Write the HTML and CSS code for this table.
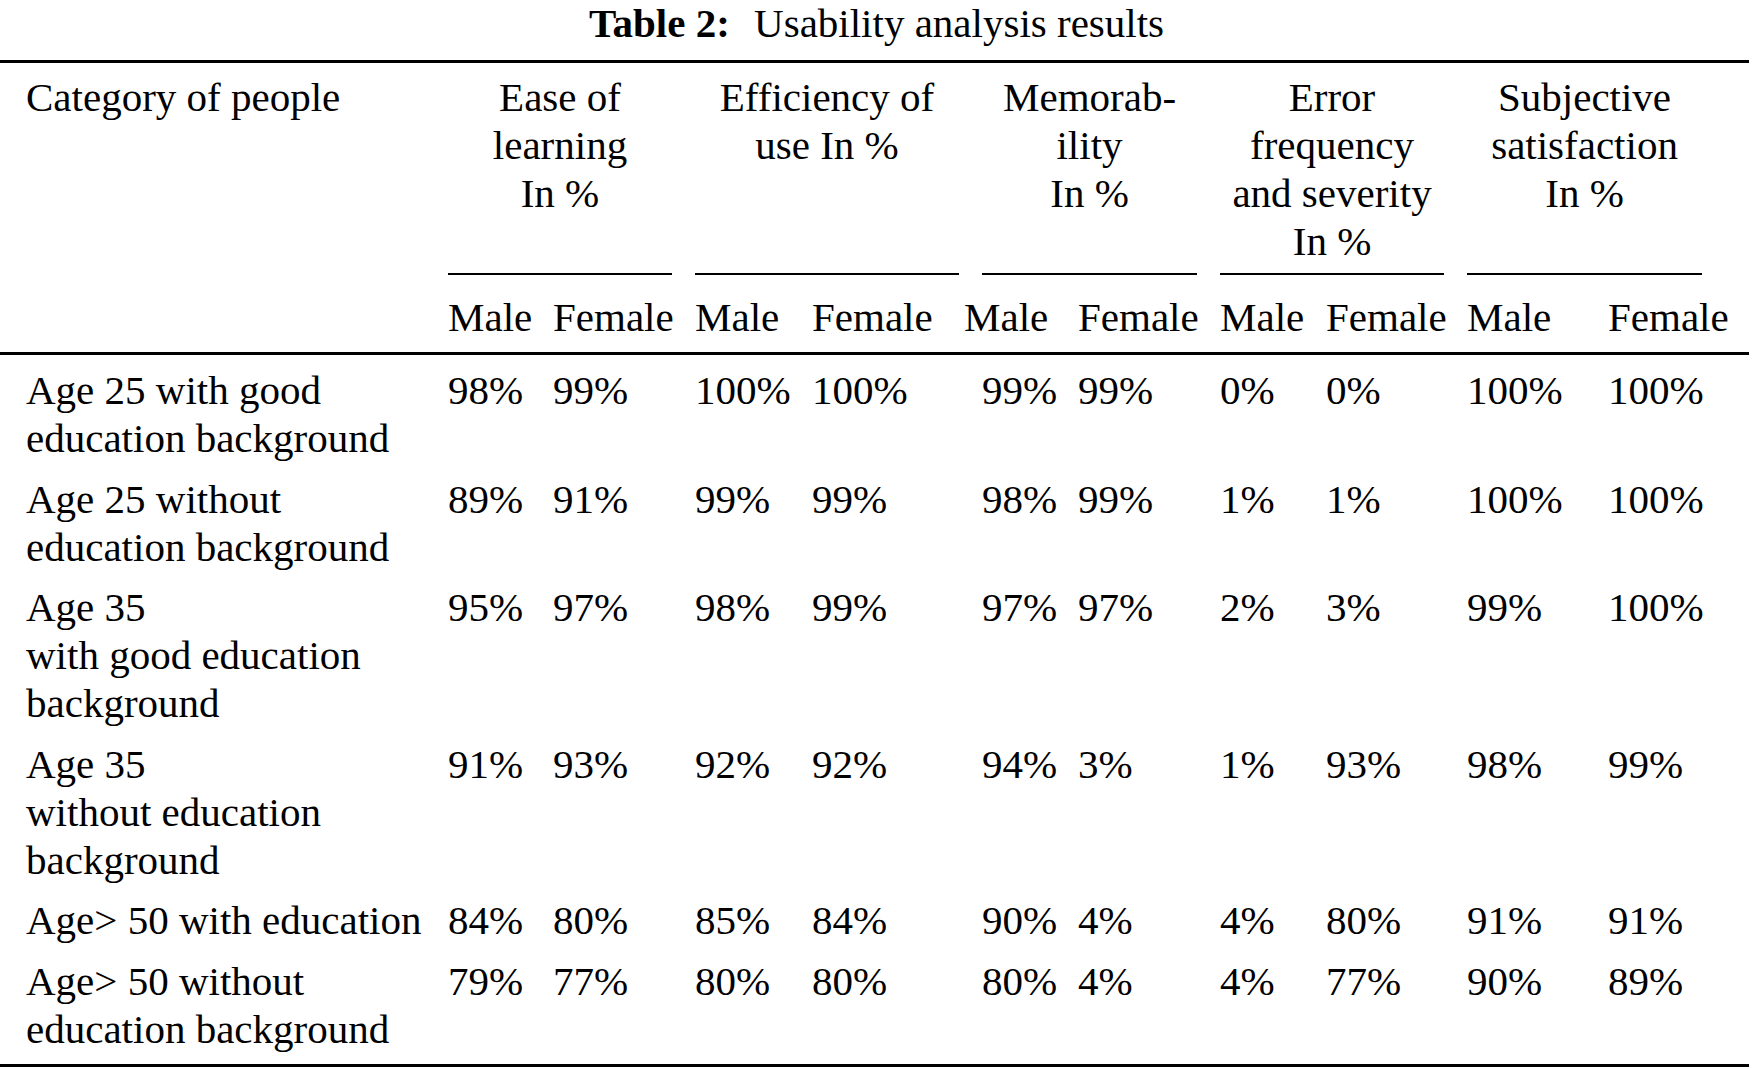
FILE: index.html
```html
<!DOCTYPE html>
<html lang="en">
<head>
<meta charset="utf-8">
<title>Table 2: Usability analysis results</title>
<link rel="stylesheet" href="styles.css">
</head>
<body>
<div class="caption"><b class="label">Table 2:</b> Usability analysis results</div>
<table class="results">
  <colgroup>
    <col class="c-cat">
    <col class="c-w105"><col class="c-w142">
    <col class="c-w117"><col class="c-w170">
    <col class="c-w96"><col class="c-w142">
    <col class="c-w106"><col class="c-w141">
    <col class="c-w141"><col class="c-w141">
  </colgroup>
  <thead>
    <tr class="groups">
      <th class="cat">Category of people</th>
      <th colspan="2"><div class="grp">Ease of<br>learning<br>In %</div></th>
      <th colspan="2"><div class="grp">Efficiency of<br>use In %</div></th>
      <th colspan="2"><div class="grp">Memorab-<br>ility<br>In %</div></th>
      <th colspan="2"><div class="grp">Error<br>frequency<br>and severity<br>In %</div></th>
      <th colspan="2"><div class="grp last">Subjective<br>satisfaction<br>In %</div></th>
    </tr>
    <tr class="sexes">
      <th class="cat"></th>
      <th>Male</th><th>Female</th>
      <th>Male</th><th>Female</th>
      <th class="shift">Male</th><th>Female</th>
      <th>Male</th><th>Female</th>
      <th>Male</th><th>Female</th>
    </tr>
  </thead>
  <tbody>
    <tr>
      <td class="cat">Age 25 with good<br>education background</td>
      <td>98%</td><td>99%</td><td>100%</td><td>100%</td><td>99%</td><td>99%</td><td>0%</td><td>0%</td><td>100%</td><td>100%</td>
    </tr>
    <tr>
      <td class="cat">Age 25 without<br>education background</td>
      <td>89%</td><td>91%</td><td>99%</td><td>99%</td><td>98%</td><td>99%</td><td>1%</td><td>1%</td><td>100%</td><td>100%</td>
    </tr>
    <tr>
      <td class="cat">Age 35<br>with good education<br>background</td>
      <td>95%</td><td>97%</td><td>98%</td><td>99%</td><td>97%</td><td>97%</td><td>2%</td><td>3%</td><td>99%</td><td>100%</td>
    </tr>
    <tr>
      <td class="cat">Age 35<br>without education<br>background</td>
      <td>91%</td><td>93%</td><td>92%</td><td>92%</td><td>94%</td><td>3%</td><td>1%</td><td>93%</td><td>98%</td><td>99%</td>
    </tr>
    <tr>
      <td class="cat">Age&gt; 50 with education</td>
      <td>84%</td><td>80%</td><td>85%</td><td>84%</td><td>90%</td><td>4%</td><td>4%</td><td>80%</td><td>91%</td><td>91%</td>
    </tr>
    <tr>
      <td class="cat">Age&gt; 50 without<br>education background</td>
      <td>79%</td><td>77%</td><td>80%</td><td>80%</td><td>80%</td><td>4%</td><td>4%</td><td>77%</td><td>90%</td><td>89%</td>
    </tr>
  </tbody>
</table>
</body>
</html>
```

FILE: styles.css
```css
html, body {
  margin: 0;
  padding: 0;
  background: #ffffff;
  color: #000000;
}

body {
  font-family: "Liberation Serif", "Times New Roman", serif;
  font-size: 41px;
  line-height: 48px;
}

.caption {
  text-align: center;
  line-height: 46px;
  height: 46px;
  margin-bottom: 14px;
  white-space: nowrap;
}

.caption .label {
  font-weight: bold;
  margin-right: 14px;
}

.results {
  width: 1749px;
  table-layout: fixed;
  border-collapse: separate;
  border-spacing: 0;
}

.c-cat { width: 448px; }
.c-w96 { width: 96px; }
.c-w105 { width: 105px; }
.c-w106 { width: 106px; }
.c-w117 { width: 117px; }
.c-w141 { width: 141px; }
.c-w142 { width: 142px; }
.c-w170 { width: 170px; }

.results th,
.results td {
  padding: 0;
  text-align: left;
  vertical-align: top;
  font-weight: normal;
  white-space: nowrap;
}

.results .cat {
  padding-left: 26px;
}

.groups th {
  border-top: 3px solid #000;
  padding-top: 10px;
}

.grp {
  height: 192px;
  margin-right: 23px;
  padding-bottom: 8px;
  border-bottom: 2px solid #000;
  text-align: center;
}

.grp.last {
  margin-right: 47px;
}

.sexes th {
  padding-top: 18px;
  padding-bottom: 11px;
  border-bottom: 3px solid #000;
}

.sexes th.shift {
  text-indent: -18px;
}

.results tbody td {
  padding-top: 6px;
  padding-bottom: 6.5px;
}

.results tbody tr:first-child td {
  padding-top: 11px;
}

.results tbody tr:last-child td {
  padding-bottom: 11.5px;
  border-bottom: 3px solid #000;
}
```
